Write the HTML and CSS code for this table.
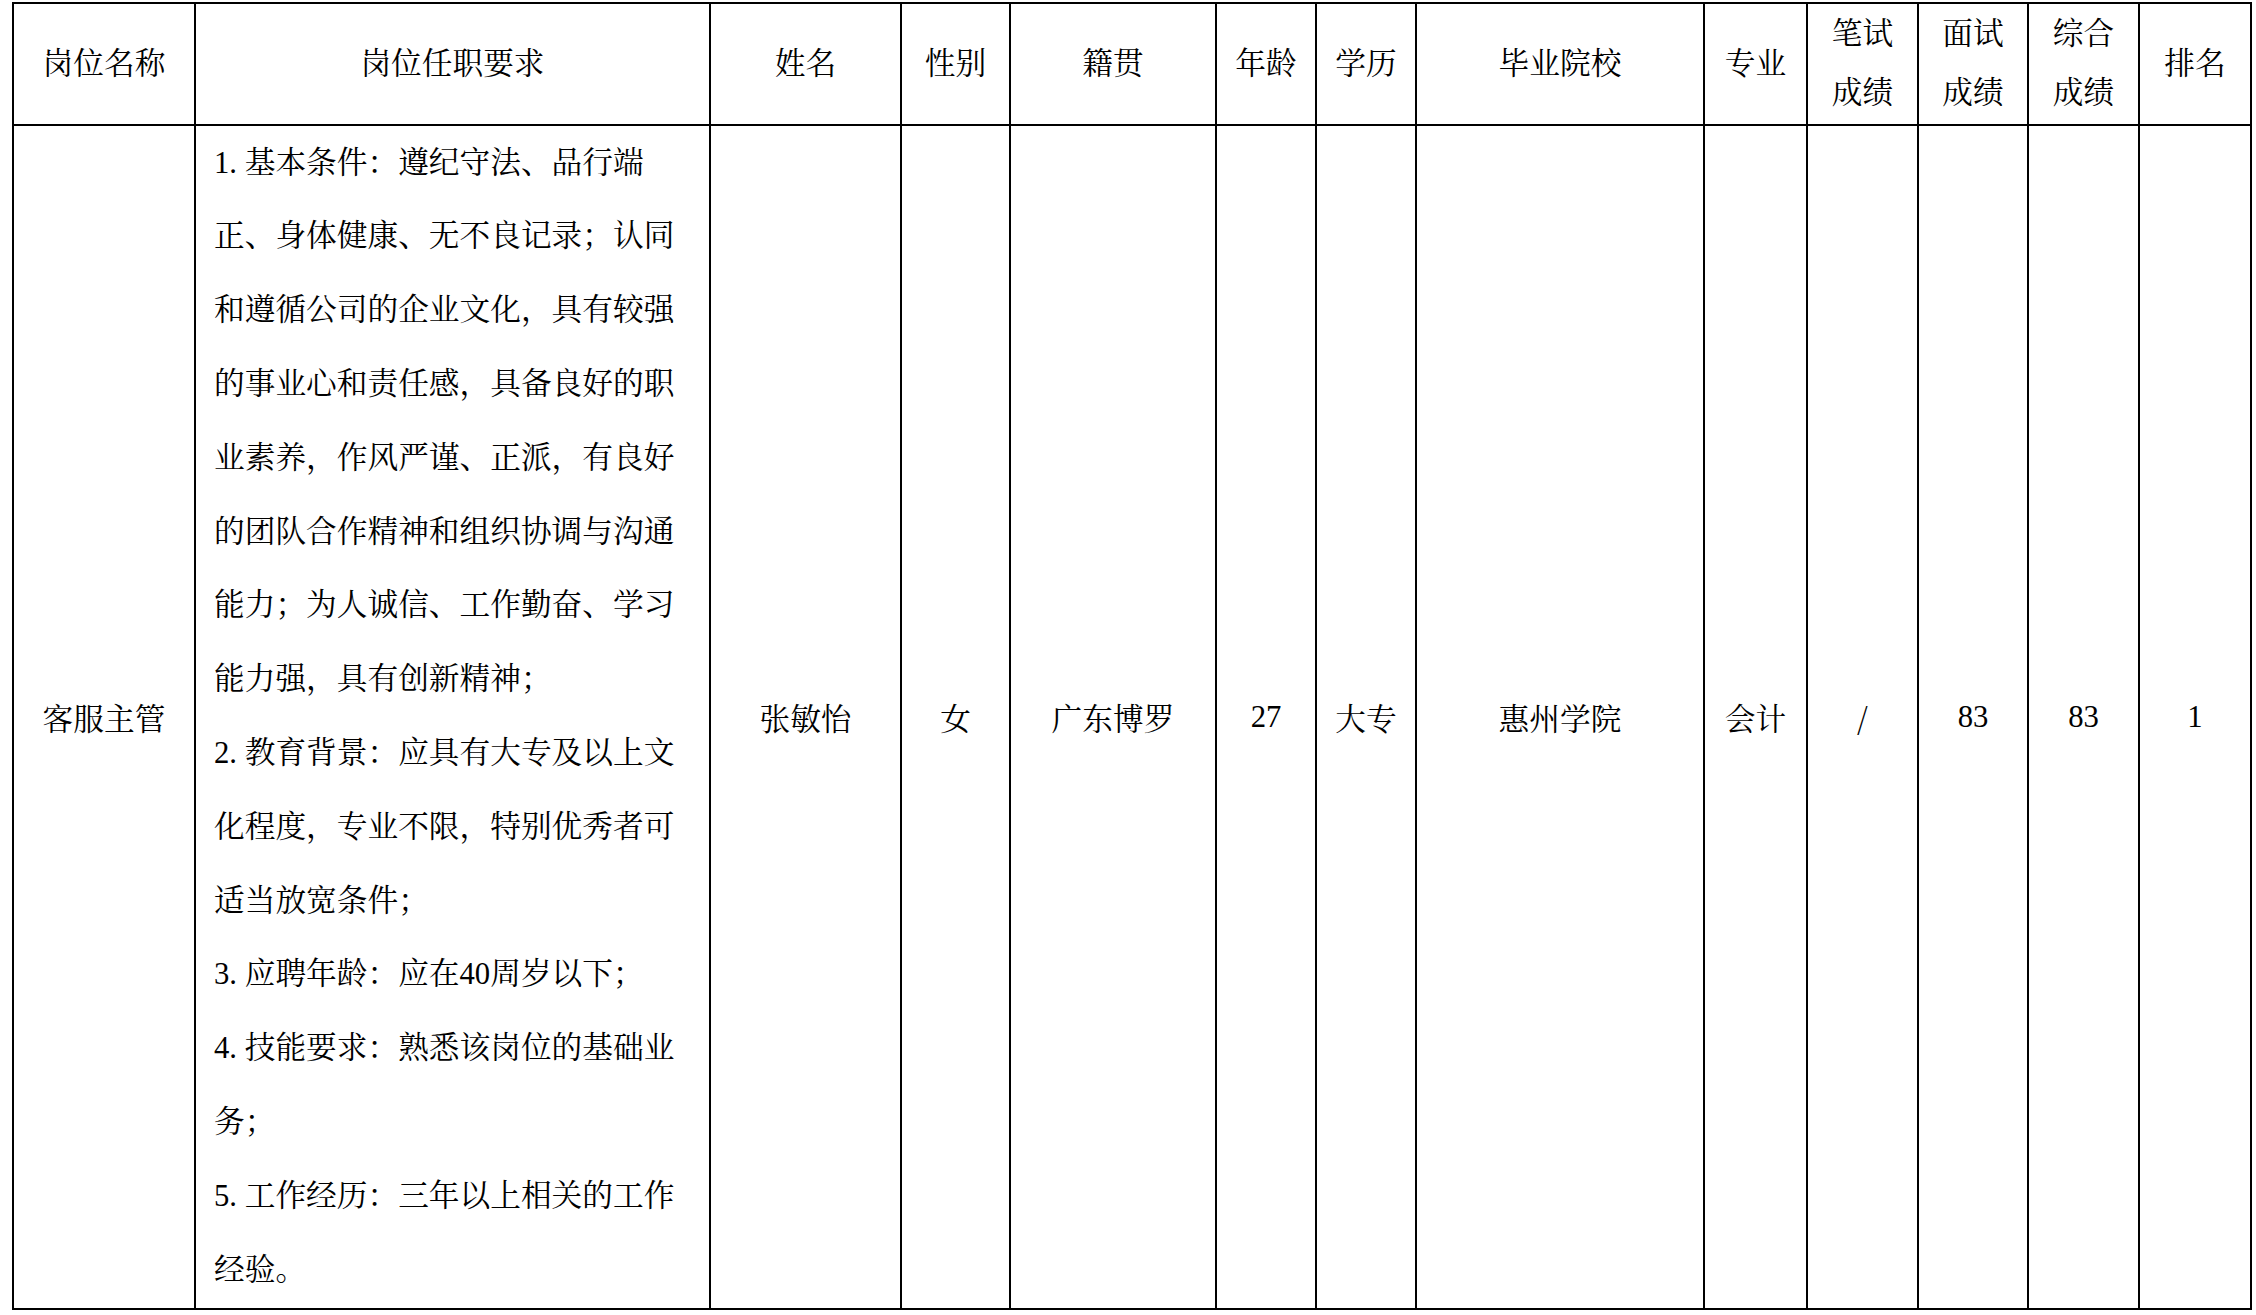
FILE: index.html
```html
<!DOCTYPE html>
<html lang="zh-CN">
<head>
<meta charset="utf-8">
<title>岗位招聘成绩</title>
<link rel="stylesheet" href="styles.css">
</head>
<body>
<div class="page">
<table class="grid">
  <colgroup>
    <col class="c-post">
    <col class="c-req">
    <col class="c-name">
    <col class="c-sex">
    <col class="c-home">
    <col class="c-age">
    <col class="c-edu">
    <col class="c-school">
    <col class="c-major">
    <col class="c-score">
    <col class="c-score2">
    <col class="c-score3">
    <col class="c-rank">
  </colgroup>
  <thead>
    <tr class="head-row">
      <th>岗位名称</th>
      <th>岗位任职要求</th>
      <th>姓名</th>
      <th>性别</th>
      <th>籍贯</th>
      <th>年龄</th>
      <th>学历</th>
      <th>毕业院校</th>
      <th>专业</th>
      <th>笔试<br>成绩</th>
      <th>面试<br>成绩</th>
      <th>综合<br>成绩</th>
      <th>排名</th>
    </tr>
  </thead>
  <tbody>
    <tr class="body-row">
      <td>客服主管</td>
      <td class="req"><span class="idx">1.</span>基本条件：遵纪守法、品行端<br>正、身体健康、无不良记录；认同<br>和遵循公司的企业文化，具有较强<br>的事业心和责任感，具备良好的职<br>业素养，作风严谨、正派，有良好<br>的团队合作精神和组织协调与沟通<br>能力；为人诚信、工作勤奋、学习<br>能力强，具有创新精神；<br><span class="idx">2.</span>教育背景：应具有大专及以上文<br>化程度，专业不限，特别优秀者可<br>适当放宽条件；<br><span class="idx">3.</span>应聘年龄：应在40周岁以下；<br><span class="idx">4.</span>技能要求：熟悉该岗位的基础业<br>务；<br><span class="idx">5.</span>工作经历：三年以上相关的工作<br>经验。</td>
      <td>张敏怡</td>
      <td>女</td>
      <td>广东博罗</td>
      <td>27</td>
      <td>大专</td>
      <td>惠州学院</td>
      <td>会计</td>
      <td class="slash">/</td>
      <td>83</td>
      <td>83</td>
      <td>1</td>
    </tr>
  </tbody>
</table>
</div>
</body>
</html>
```
FILE: styles.css
```css
html, body {
  margin: 0;
  padding: 0;
  background: #ffffff;
}

.page {
  padding: 2px 0 0 12px;
}

.grid {
  border-collapse: collapse;
  table-layout: fixed;
  width: 2240px;
  font-family: "Liberation Serif", "Noto Serif CJK SC", "Noto Sans CJK SC", serif;
  font-size: 30.7px;
  color: #000000;
}

.grid th,
.grid td {
  border: 2px solid #000000;
  padding: 0;
  text-align: center;
  vertical-align: middle;
  font-weight: normal;
}

.c-post { width: 182px; }
.c-req { width: 515px; }
.c-name { width: 191px; }
.c-sex { width: 109px; }
.c-home { width: 206px; }
.c-age { width: 100px; }
.c-edu { width: 100px; }
.c-school { width: 288px; }
.c-major { width: 103px; }
.c-score { width: 111px; }
.c-score2 { width: 110px; }
.c-score3 { width: 111px; }
.c-rank { width: 112px; }

.head-row {
  height: 122px;
}

.head-row th {
  line-height: 59px;
}

.body-row {
  height: 1184px;
}

.grid td.req {
  text-align: left;
  padding: 0 12px 0 18px;
  line-height: 73.8px;
  white-space: nowrap;
}

.idx {
  display: inline-block;
  width: 1em;
}

.slash {
  font-family: "Noto Serif CJK SC", "Noto Sans CJK SC", sans-serif;
}
```
